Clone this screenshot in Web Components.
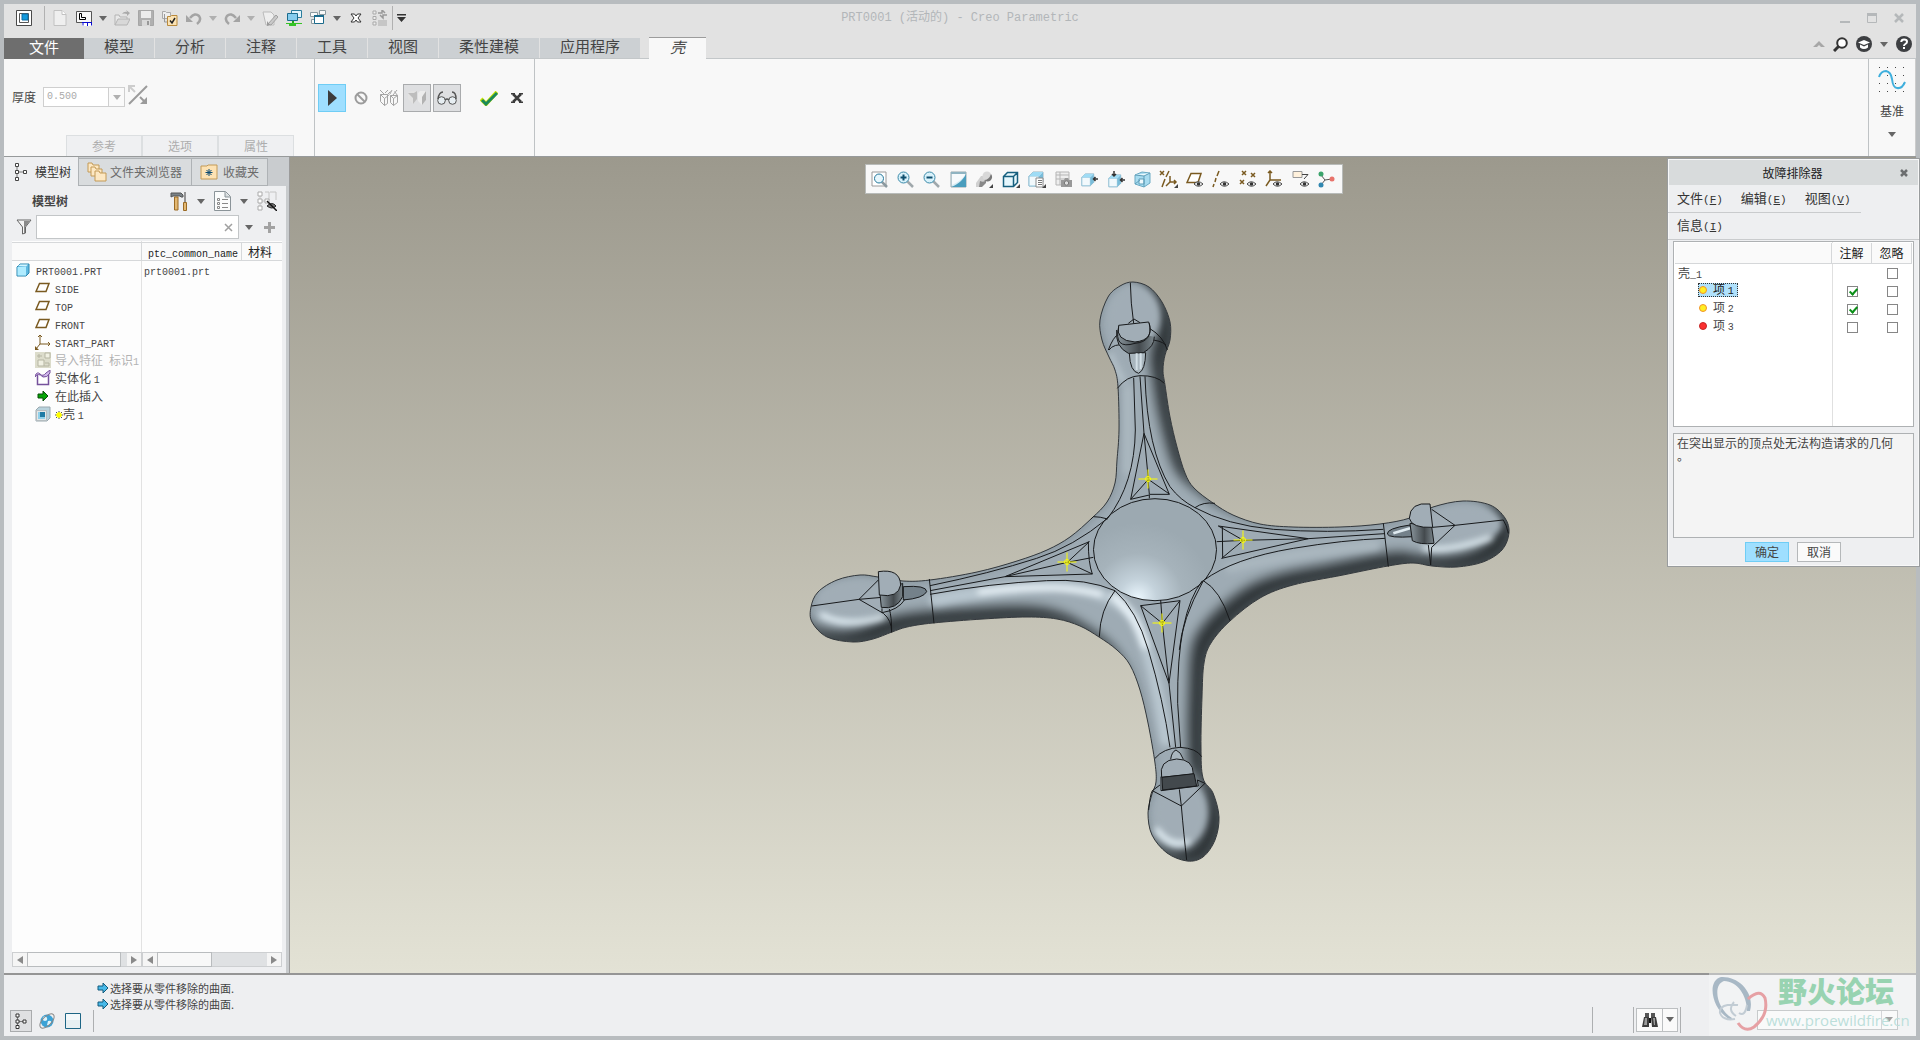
<!DOCTYPE html>
<html lang="zh-CN">
<head>
<meta charset="utf-8">
<title>PRT0001 (活动的) - Creo Parametric</title>
<style>
html,body{margin:0;height:100%}
body{font-family:"Noto Sans CJK SC","Liberation Sans",sans-serif;font-size:12px;line-height:18px;color:#454545;
--frame:#b8bcbf;--bar:#e2e2e2;--panel:#eeeff1;--sheet:#f8f8f8;--edge:#bfc3c5;--accent:#9fdfff;--accentEdge:#6fcdf5;--mono:"Liberation Mono",monospace}
</style>
</head>
<body>
<creo-app></creo-app>
<script>
const base=`*,:host{box-sizing:border-box}:host{display:block}:host([hidden]){display:none}
button,input,select,textarea{font:inherit;color:inherit;margin:0;padding:0;border:0;background:none;border-radius:0}
svg{display:block}.m{font-family:var(--mono);font-size:10px;line-height:10px}`;
function define(name,css,html){
  customElements.define(name,class extends HTMLElement{
    constructor(){super();this.attachShadow({mode:'open'});}
    connectedCallback(){
      if(this.ready)return;
      const t=document.createElement('template');
      t.innerHTML=`<style>${base}${css}</style>${typeof html==='function'?html(this):html}`;
      this.shadowRoot.append(t.content.cloneNode(true));this.ready=true;}
  });
}

/* icons: name -> [width, height, markup] */
const g='#b4b4b4', br='#7a5a20';
const cube=`<path d="M1 5l4-4h10v10l-4 4H1z" fill="#e2f3fb" stroke="#9db4bf"/><path d="M1 5h10v10H1z" fill="#f2f9fc" stroke="#8ec3da"/><path d="M11 5l4-4v10l-4 4z" fill="#79bcd9"/><path d="M1 5l4-4h10l-4 4z" fill="#9fdcf5"/>`;
const eye=`<path d="M8 14q4-4.500 9 0-4.500 4.500-9 0z" fill="#fff" stroke="#444"/><circle cx="12.500" cy="14" r="1.800" fill="#333"/>`;
const icons={
down:[8,5,`<path d="M0 0h8L4 5z" fill="#666"/>`],
downg:[8,5,`<path d="M0 0h8L4 5z" fill="#b0b0b0"/>`],
more:[9,8,`<path d="M0 0h9v1.500H0zM0 3h9L4.500 8z" fill="#333"/>`],
app:[16,16,`<path d="M.5.5h15v15H.5z" fill="#fff" stroke="#4a4a4a"/><path d="M3.500 3.500h9v9h-9z" fill="#fff" stroke="#555"/><path d="M6 4h6v6H6z" fill="#1299dc" stroke="#0b6aa2"/>`],
newf:[16,16,`<path d="M2 .5h8l4 4v11H2z" fill="#efefef" stroke="#c2c2c2"/><path d="M10 .5v4h4" fill="#fff" stroke="#c2c2c2"/>`],
win:[16,16,`<path d="M.5 1.500h15v11H.5z" fill="#f8f8f8" stroke="#555"/><path d="M3.500 3.500v6h6v-2h-4v-4z" fill="#fff" stroke="#000"/><path d="M6 12h10v4H6z" fill="#fff"/><path d="M7 15.500v-3h8.500v3M11.500 12v4M6 12.500h10" stroke="#0b0bd0" fill="none"/>`],
open:[16,16,`<path d="M1 15V5h4l1 2h7v2" fill="#e9e9e9" stroke="${g}"/><path d="M1 15l3-6h12l-3 6z" fill="#d8d8d8" stroke="${g}"/><path d="M8 4q2-3 5-2l-1-2 4 3-3 3v-2q-3-1-5 0z" fill="#aaa"/>`],
save:[16,16,`<path d="M.5.5h15v15H.5z" fill="#b0b0b0" stroke="#a6a6a6"/><path d="M3 1h10v7H3z" fill="#ececec"/><path d="M4 10h8v6H4z" fill="#d9d9d9"/><path d="M9 11h2v4H9z" fill="#999"/>`],
fold:[16,16,`<path d="M.5 1.500h3l1 1h4v6h-8z" fill="#eee" stroke="#aaa"/><path d="M2.500 4v8h3" stroke="#999" fill="none"/><path d="M5.500 6.500h3l1-1h5.500v10H5.500z" fill="#fbe3b4" stroke="#b98a3d"/><path d="M8 10.500l2 2.500 3-5" fill="none" stroke="#222" stroke-width="1.500"/>`],
undo:[16,16,`<path d="M4 8q5-6 9-2 3 4-2 8" fill="none" stroke="#a4a4a4" stroke-width="2.500"/><path d="M0 5v7h7z" fill="#a4a4a4"/>`],
redo:[16,16,`<path d="M12 8Q7 2 3 6q-3 4 2 8" fill="none" stroke="#a4a4a4" stroke-width="2.500"/><path d="M16 5v7H9z" fill="#a4a4a4"/>`],
regen:[16,16,`<path d="M1 2h8l3 3v10H4z" fill="#eee" stroke="#bbb"/><path d="M6 14l8-9 2 2-7 8z" fill="#c9c9c9" stroke="#a0a0a0"/><path d="M5 11l3 4-3 1z" fill="#999"/>`],
screens:[16,16,`<path d="M5.500.5h10v7h-10z" fill="#e4f5fc" stroke="#2a7d9d"/><path d="M1.500 3.500h10v7h-10z" fill="#86cdee" stroke="#1c6b8c"/><path d="M6 11h2v3H6z" fill="#27a51b"/><path d="M0 13h16v1H0zM3 14h7v2H3z" fill="#35c326"/>`],
windows:[16,16,`<path d="M.5 2.500h7v4h-7zM9.500.5h6v4h-6zM1.500 9.500h6v4h-6z" fill="#fafafa" stroke="#8c9a9f"/><path d="M4.500 5.500h9v8h-9z" fill="#fff" stroke="#1c6b8c"/><path d="M4 5h10v2H4z" fill="#1c6b8c"/>`],
closew:[16,16,`<path d="M3 4h3.500L8 6l1.500-2H13l-3 4 3 4H9.500L8 10l-1.500 2H3l3-4z" fill="#fff" stroke="#333"/>`],
list:[16,16,`<path d="M1 1h3v3H1zM1 6.500h3v3H1zM1 12h3v3H1z" fill="#eee" stroke="#a9a9a9"/><path d="M6 11h9M6 13h9M6 15h9" stroke="#aaa"/><path d="M6 3h4V0l3 3M15 5h-4v3L8 5" stroke="#999" fill="none" stroke-width="1.500"/>`],
min:[10,10,`<path d="M0 8h10v2H0z" fill="#b5b8ba"/>`],
max:[10,10,`<path d="M.5 1h9v8.500h-9z" fill="none" stroke="#b5b8ba"/><path d="M0 0h10v3H0z" fill="#b5b8ba"/>`],
cls:[10,10,`<path d="M1 1l8 8M9 1L1 9" stroke="#b5b8ba" stroke-width="2.500"/>`],
caret:[12,6,`<path d="M0 6l6-6 6 6H8L6 4 4 6z" fill="#a7a7a7"/>`],
find:[15,15,`<path d="M5.500 9.500L1 14" stroke="#333" stroke-width="3"/><circle cx="9" cy="6" r="4.800" fill="#fff" stroke="#333" stroke-width="2"/>`],
hat:[16,16,`<circle cx="8" cy="8" r="8" fill="#3d3f42"/><path d="M2 6.500L8 4l6 2.500L8 9z" fill="#fff"/><path d="M4 8.500v3q4 3 8 0v-3L8 10.500z" fill="#fff"/>`],
help:[16,16,`<circle cx="8" cy="8" r="8" fill="#3d3f42"/><path d="M5.200 6q.3-2.500 2.800-2.500 3 0 3 2.300 0 1.300-1.600 2.200Q8 8.800 8 10" fill="none" stroke="#fff" stroke-width="2"/><path d="M7 11h2v2H7z" fill="#fff"/>`],
flip:[20,20,`<path d="M1 19L19 1" stroke="#9b9b9b" stroke-width="2"/><path d="M1 7V1h6" fill="none" stroke="#cdcdcd" stroke-width="2"/><path d="M1 1l6 6" stroke="#cdcdcd" stroke-width="2"/><path d="M19 12v7h-7z" fill="#9b9b9b"/><path d="M12 12l6 6" stroke="#9b9b9b" stroke-width="2"/>`],
play:[9,16,`<path d="M0 0l9 8-9 8z" fill="#3c3c3c"/>`],
no:[14,14,`<circle cx="7" cy="7" r="5.500" fill="none" stroke="#9c9c9c" stroke-width="2"/><path d="M3 3l8 8" stroke="#9c9c9c" stroke-width="2"/>`],
wire:[20,18,`<path d="M1.500 5.500h7v9l-3 2-4-4zM8.500 5.500l3-3M11.500 6.500h7v7l-4 3-3-3zM18.500 6.500l-3-4M1.500 5.500l4 4v7M5.500 9.500l5-4M14.500 16.500v-7l4-3M11.500 6.500l3 3M1 1l4 4M9 1L6 4M13 1l-2 4M18 1l-4 5" fill="none" stroke="#a5a5a5"/>`],
solid:[20,18,`<path d="M1 4l3-2h6v8l-4 5-5-5z" fill="#e2e2e2"/><path d="M1 4h6l3-2v8l-4 5V9z" fill="#bdbdbd"/><path d="M11 4l2-2h6v9l-4 5-4-4z" fill="#ececec"/><path d="M15 8l4-6v9l-4 5z" fill="#b2b2b2"/>`],
glass:[20,16,`<circle cx="4.500" cy="10.500" r="3.800" fill="#e7eef2" stroke="#555"/><circle cx="15.500" cy="10.500" r="3.800" fill="#e7eef2" stroke="#555"/><path d="M8 10q2-2 4 0M1 9Q2 2 6 2M19 9q0-7-4-7" fill="none" stroke="#555" stroke-width="1.500"/>`],
check:[18,15,`<path d="M1 8l5 5L17 1" fill="none" stroke="#c6e300" stroke-width="4"/><path d="M2 9l4 4L17 2" fill="none" stroke="#1a8a5a" stroke-width="3"/>`],
xx:[12,12,`<path d="M2 2l8 8M10 2l-8 8" stroke="#3d3d3d" stroke-width="2.500"/><path d="M0 1h4v1.500H0zM8 1h4v1.500H8zM0 9.500h4V11H0zM8 9.500h4V11H8z" fill="#3d3d3d"/>`],
datum:[28,28,`<g fill="#444"><path d="M1 1h1v1H1zM9 1h1v1H9zM17 1h1v1h-1zM25 1h1v1h-1zM1 9h1v1H1zM9 9h1v1H9zM17 9h1v1h-1zM25 9h1v1h-1zM1 17h1v1H1zM9 17h1v1H9zM17 17h1v1h-1zM25 17h1v1h-1zM1 25h1v1H1zM9 25h1v1H9zM17 25h1v1h-1zM25 25h1v1h-1z"/></g><path d="M1 11q2-6 7-6 5 1 6 8 1 9 5 9 5 1 8-6" fill="none" stroke="#3fafdd" stroke-width="2"/>`],
tree:[14,20,`<path d="M3 5v10M5 10h5" stroke="#777"/><path d="M1.500 1.500h3v3h-3zM1.500 8.500h3v3h-3zM1.500 15.500h3v3h-3zM9.500 8.500h3v3h-3z" fill="#fff" stroke="#444"/>`],
treeb:[12,16,`<path d="M2.500 4v8M4 8.500h5" stroke="#777"/><path d="M1 1h3v3H1zM1 7h3v3H1zM1 12.500h3v3H1zM8 7h3v3H8z" fill="#fff" stroke="#333"/>`],
folders:[20,20,`<g fill="#fde8c3" stroke="#c39a57"><path d="M1 1h4l1 2h6v7H1z"/><path d="M4 5h4l1 2h6v7H4z"/><path d="M8 9h4l1 2h6v8H8z"/></g>`],
fav:[18,16,`<path d="M1 2h6l1-1h9v14H1z" fill="#fde2b3" stroke="#c39a57"/><path d="M9 5v7M5.500 8.500h7M6.500 6l5 5M11.500 6l-5 5" stroke="#0b4a73"/>`],
tools:[18,20,`<path d="M1 2h10l2 2v2h-2l-1-1H3L1 6z" fill="#7b8388" stroke="#555"/><path d="M4.500 6h3.500v13H4.500z" fill="#e3b873" stroke="#9a6a24"/><path d="M15 1v10" stroke="#777" stroke-width="1.500"/><path d="M13.500 11.500h3v8h-3z" fill="#e3b873" stroke="#9a6a24"/>`],
doc:[17,20,`<path d="M.5.5h11l5 5v14H.5z" fill="#fbfcfc" stroke="#8b9499"/><path d="M11 1v5h5" fill="#d7dcde" stroke="#8b9499"/><path d="M3.500 7.500h2v2h-2zM3.500 11.500h2v2H3.500zM3.500 15.500h2v2h-2z" fill="#fff" stroke="#888"/><path d="M8 8.500h6M8 12.500h6M8 16.500h6" stroke="#888"/>`],
treeeye:[20,20,`<path d="M3 5v10M5 10h5M8 1h4v8M13 1h6v8" stroke="#c4c4c4" fill="none"/><path d="M1 1h4v4H1zM1 8h4v4H1zM1 15h4v4H1zM8 8h4v4H8z" fill="#fff" stroke="#aaa"/><path d="M10 15q5-5 9 0-4 4-9 0z" fill="#777" stroke="#222"/><path d="M10 10l10 10" stroke="#111" stroke-width="1.500"/>`],
funnel:[16,16,`<path d="M1 1h14l-5.500 7v6l-3 1V8z" fill="#f4f4f4" stroke="#666"/><path d="M8 2h6L9 8v6H8z" fill="#8a8a8a"/>`],
tinyx:[9,9,`<path d="M1 1l7 7M8 1L1 8" stroke="#a0a0a0" stroke-width="1.500"/>`],
plus:[11,11,`<path d="M4 0h3v4h4v3H7v4H4V7H0V4h4z" fill="#a2a2a2"/>`],
part:[14,14,`<path d="M1 4l3-3h9v9l-3 3H1z" fill="#5db8e0" stroke="#2c86ae"/><path d="M1.500 4h8.500v8.500H1.500z" fill="#b0ecff"/><path d="M2 3l2-1.500h8L10 3.500z" fill="#d3f5ff"/>`],
plane:[16,12,`<path d="M4.500 1.500H14L11 9.500H1z" fill="#fff" stroke="${br}" stroke-width="1.500"/>`],
csys:[16,16,`<path d="M5 1v9l-4 5M5 10h10M3 3l2-2 2 2M13 8l2 2-2 2" fill="none" stroke="${br}"/><path d="M0 12v4h4z" fill="${br}"/>`],
imp:[16,16,`<path d="M0 0h16v16H0z" fill="#dcdccb"/><path d="M10 1h5v5h-5zM3 8h6v6H3z" fill="#f0f0e2" stroke="#b5b5a2"/><path d="M2 4h5M4 2v4M10 11h4v3H9" stroke="#b5b5a2" fill="none"/>`],
solidify:[16,16,`<path d="M2.500 5v9.500h11V4" fill="#fff" stroke="#76529c" stroke-width="1.500"/><path d="M0 6Q2 1 5 4q3 3 6-1l4-3v3q-3 5-7 4Q3 2 0 7z" fill="#d0b7ea" stroke="#76529c"/>`],
insert:[12,12,`<path d="M1 4h5V1l5 5-5 5V8H1z" fill="#05a405" stroke="#0a4d0a"/>`],
shell:[16,16,`<path d="M1 4l3-3h11v11l-3 3H1z" fill="#b9d3dd" stroke="#9aa9b0"/><path d="M1.500 4.500h10v10h-10z" fill="#e4e7e8" stroke="#b5bdc0"/><path d="M3 6h7v7H3z" fill="#8fd0ea"/><path d="M5 6h5v5H5z" fill="#1f7ba5"/>`],
star:[8,8,`<path d="M4 0v8M0 4h8M1 1l6 6M7 1L1 7" stroke="#555"/><path d="M4 1v6M1 4h6M2 2l4 4M6 2L2 6" stroke="#ff0" stroke-width="1.500"/>`],
la:[6,8,`<path d="M6 0v8L0 4z" fill="#8a8a8a"/>`],ra:[6,8,`<path d="M0 0v8l6-4z" fill="#8a8a8a"/>`],
zfit:[17,17,`<path d="M1 1h14v14H1z" fill="#fff" stroke="#9a9a9a"/><path d="M11 11l5 5" stroke="#8d9aa0" stroke-width="2.500"/><circle cx="8" cy="7.500" r="4.500" fill="#e6f6fc" stroke="#26789a"/>`],
zin:[17,17,`<path d="M10 10l6 6" stroke="#a0a8ac" stroke-width="2.500"/><circle cx="6.500" cy="6.500" r="5.500" fill="#d9f2fb" stroke="#3b8aa9"/><path d="M3.500 6.500h6M6.500 3.500v6" stroke="#0f4f6e" stroke-width="2"/>`],
zout:[17,17,`<path d="M10 10l6 6" stroke="#a0a8ac" stroke-width="2.500"/><circle cx="6.500" cy="6.500" r="5.500" fill="#d9f2fb" stroke="#3b8aa9"/><path d="M3.500 6.500h6" stroke="#0f4f6e" stroke-width="2"/>`],
repaint:[17,17,`<path d="M1 1h15v15H1z" fill="#d5ebf3" stroke="#98a8ae"/><path d="M1 16C5 15 13 10 16 3v13z" fill="#4a9dbd"/><path d="M2 3h13v1Q11 10 2 14z" fill="#f6fafc"/><path d="M1 1h15v2H1z" fill="#8fb4c2"/>`],
shade:[18,17,`<path d="M1 12l5-7h4v7l-4 4H1z" fill="#d0d0d0"/><circle cx="12" cy="5" r="4.500" fill="#d8d8d8"/><path d="M16 3a4.500 4.500 0 01-7 6q5 0 7-6z" fill="#777"/><path d="M5 10q4 2 6-1v3l-4 4H4z" fill="#888"/><path d="M18 13v4h-4z" fill="#444"/>`],
box:[18,17,`<path d="M1.500 5.500l4-4h10v10l-4 4h-10zM1.500 5.500h10v10M11.500 5.500l4-4" fill="#e6f7fd" stroke="#17607f" stroke-width="1.500"/><path d="M18 13v4h-4z" fill="#444"/>`],
boxl:[18,17,cube+`<path d="M8 7h7v9H8z" fill="#fff" stroke="#8a8a8a"/><path d="M10 9.500h4M10 11.500h4M10 13.500h4" stroke="#777"/><path d="M18 13v4h-4z" fill="#444"/>`],
cam:[17,17,`<path d="M1 1h13v13H1z" fill="#eee" stroke="#b5b5b5"/><path d="M1 4h13M1 8h13M5 1v13" stroke="#b5b5b5"/><path d="M6 9h3l1-2h3l1 2h3v7H6z" fill="#999"/><circle cx="11.500" cy="12" r="2.200" fill="#ddd" stroke="#777"/>`],
boxa:[17,17,`<g transform="translate(0 2) scale(.85)">${cube}</g><path d="M17 8h-4M14.500 6L12.500 8l2 2" fill="none" stroke="#333" stroke-width="1.500"/>`],
boxb:[17,17,`<g transform="translate(0 3) scale(.85)">${cube}</g><path d="M17 9h-4M14.500 7L12.500 9l2 2M6 0v5M4 3l2 2 2-2" fill="none" stroke="#333" stroke-width="1.500"/>`],
persp:[17,17,`<path d="M1 4l7-3 8 1v10l-6 4-9-3z" fill="#a8dcf0" stroke="#6aa9c3"/><path d="M1 4l9 1 6-3M10 5v11M5 8h5v5H5z" fill="#eef9fd" stroke="#5d9db8"/><path d="M1 13l5-4" stroke="#5d9db8"/>`],
datd:[19,18,`<path d="M1 1l4 4M5 1L1 5M10 1L7 7M6 9l-3 8" stroke="${br}" stroke-width="1.500"/><path d="M11 6v6l-4 4M11 12h6M15 10l2 2-2 2" fill="none" stroke="${br}" stroke-width="1.500"/><path d="M19 14v4h-4z" fill="#444"/>`],
pln:[18,18,`<path d="M5 3.500h10L12 12.500H1z" fill="#fff" stroke="${br}" stroke-width="1.500"/>${eye}`],
axi:[18,18,`<path d="M7 1L5 6M4 8l-1 4M2 14l-1 3" stroke="${br}" stroke-width="1.500"/>${eye}`],
pts:[18,18,`<path d="M3 1l4 4M7 1L3 5M12 3l4 4M16 3l-4 4M1 10l4 4M5 10l-4 4" stroke="${br}" stroke-width="1.500"/>${eye}`],
csy:[18,18,`<path d="M5 1v9l-4 6M5 10h11M3 3l2-2 2 2" fill="none" stroke="${br}" stroke-width="1.500"/>${eye}`],
ann:[18,18,`<path d="M1 1.500h9v6H1z" fill="#fff1dc" stroke="#999"/><path d="M10 4.500h6L12 9" fill="none" stroke="#444"/>${eye}`],
spin:[17,17,`<path d="M3 4l4 5 7-1M7 9l-4 5" stroke="#555" fill="none"/><circle cx="3" cy="3" r="2.500" fill="#3aa36b"/><circle cx="14" cy="8" r="2.500" fill="#e8736b"/><circle cx="3" cy="14" r="2.500" fill="#3187b0"/>`],
dx:[8,8,`<path d="M1 1l6 6M7 1L1 7" stroke="#6c6e70" stroke-width="2.500"/>`],
oy:[8,8,`<circle cx="4" cy="4" r="3.500" fill="#ffee22" stroke="#f0932a"/>`],
or:[8,8,`<circle cx="4" cy="4" r="3.500" fill="#fb3030" stroke="#c32626"/>`],
arrow:[12,12,`<path d="M1 4h5V1l5 5-5 5V8H1z" fill="#47b8e8" stroke="#125a7c"/>`],
globe:[16,16,`<circle cx="8" cy="8" r="6.500" fill="#3ba2d6"/><path d="M4 4q3-2 4 1t-2 3-2-4zM9 8q4-1 3 2t-4 2z" fill="#dff4fb"/><ellipse cx="8" cy="8" rx="9" ry="4.500" transform="rotate(-45 8 8)" fill="none" stroke="#888"/>`],
blank:[16,16,`<path d="M.5.5h15v15H.5z" fill="#e6eff2" stroke="#1d6585"/><path d="M1 1h14v6H1z" fill="#f3f8fa"/>`],
bino:[18,16,`<path d="M4 1h4v4H4zM10 1h4v4h-4z" fill="#555"/><path d="M3 5h5v10H1zM10 5h5l2 10h-6z" fill="#3d3d3d"/><path d="M8 6h2v5H8z" fill="#111"/><path d="M4 6h2v7H3zM12 6h2v7h-1z" fill="#9b9b9b"/>`]
};
define('creo-icon',':host{display:inline-block;flex:none;line-height:0}',el=>{const i=icons[el.getAttribute('name')];
  return `<svg width="${i[0]}" height="${i[1]}" viewBox="0 0 ${i[0]} ${i[1]}" aria-hidden="true">${i[2]}</svg>`;});
const ic=n=>`<creo-icon name="${n}"></creo-icon>`;
const btn=(n,l,c='')=>`<button type="button" class="${c}" aria-label="${l}">${ic(n)}</button>`;

define('creo-titlebar',`
:host{display:grid;grid-template-columns:1fr auto 1fr;height:34px;background:var(--bar)}
nav{display:flex;align-items:center;gap:8px;padding:0 0 6px 12px;height:34px}
button{width:16px;height:16px;display:flex;align-items:center;justify-content:center}
.a{width:8px;margin:0 -1px}
i{width:1px;height:24px;background:#b1b1b1}.f{margin:0 -1px 0 4px}.l{margin:0 -4px}.last{width:9px}
.t{font:12px/20px "Liberation Mono","Noto Sans CJK SC",monospace;color:#b2b6b9;padding-top:4px}
.w{display:flex;justify-content:flex-end;gap:11px;padding:6px 9px 0 0}`,
`<nav>${btn('app','窗口')}<i class="f"></i>${btn('newf','新建')}${btn('win','窗口')}${btn('down','更多','a')}${btn('open','打开')}${btn('save','保存')}${btn('fold','管理')}${btn('undo','撤消')}${btn('downg','更多','a')}${btn('redo','重做')}${btn('downg','更多','a')}${btn('regen','重新生成')}${btn('screens','刷新')}${btn('windows','切换窗口')}${btn('down','更多','a')}${btn('closew','关闭')}${btn('list','列表')}<i class="l"></i>${btn('more','自定义','last')}</nav>
<div class="t">PRT0001 (活动的) - Creo Parametric</div>
<div class="w">${btn('min','最小化')}${btn('max','最大化')}${btn('cls','关闭')}</div>`);

define('creo-tabs',`
:host{display:flex;justify-content:space-between;height:21px;background:var(--bar);border-bottom:1px solid #c3c7c9}
div{display:flex}.l{gap:1px}
.l button{height:20px;padding:0 20px 4px;background:#ccd0d3;font-size:15px;line-height:16px;color:#444}
.l .file{background:#6e6e6e;color:#fff;padding:0 25px 4px;height:21px;margin-right:-1px}
.l .on{background:var(--sheet);margin:-1px 0 -1px 8px;border-top:1px solid #9c9c9c;height:23px;font-style:italic;padding:0 21px 4px;position:relative}
.r{align-items:flex-start;padding-right:4px;gap:8px;margin-top:-2px}
.r button{height:16px;display:flex;align-items:center}`,
`<div class="l"><button class="file">文件</button><button>模型</button><button>分析</button><button>注释</button><button>工具</button><button>视图</button><button>柔性建模</button><button>应用程序</button><button class="on">壳</button></div>
<div class="r">${btn('caret','折叠')}${btn('find','搜索')}${btn('hat','学习')}${btn('down','更多')}${btn('help','帮助')}</div>`);

define('creo-ribbon',`
:host{display:flex;height:98px;background:var(--sheet);border-bottom:1px solid #979a9b}
.p{display:flex;flex-direction:column;justify-content:space-between;width:311px;border-right:1px solid var(--edge);padding-top:28px}
.row{display:flex;align-items:center;padding-left:8px;height:20px}
label{width:31px}
.in{display:flex;width:82px;height:20px;border:1px solid #cfcfcf;background:#fff;margin-right:3px}
input{width:64px;padding-left:3px;font-family:var(--mono);font-size:10px;color:#aaa}
.in button{flex:1;display:flex;align-items:center;justify-content:center;border-left:1px solid #cfcfcf;background:#fafafa}
.s{display:flex;padding-left:62px}
.s button{width:76px;height:21px;border:1px solid #dcdfe1;border-bottom:0;background:#eff0f2;color:#adadad}
.b{display:flex;align-items:flex-start;width:220px;border-right:1px solid var(--edge);padding:25px 0 0 3px}
.b button{width:28px;height:28px;display:flex;align-items:center;justify-content:center}
.b .go{background:var(--accent);border:1px solid var(--accentEdge);margin-right:1px}
.b .d{background:#dedfe1;border:1px solid #a9abad}
.b .d+.d{margin-left:2px}.b .ok{margin-left:14px}
.e{margin-left:auto;border-left:1px solid var(--edge);border-right:1px solid #ccc;width:48px;padding-top:7px;display:flex;flex-direction:column;align-items:center;gap:9px}
.e span{line-height:16px}.e button{display:flex;margin-top:4px}`,
`<section class="p"><div class="row"><label for="t">厚度</label><div class="in"><input id="t" value="0.500">${btn('downg','厚度列表')}</div>${btn('flip','反向')}</div>
<div class="s"><button>参考</button><button>选项</button><button>属性</button></div></section>
<section class="b">${btn('play','继续','go')}${btn('no','无预览')}${btn('wire','线框')}${btn('solid','着色','d')}${btn('glass','预览','d')}${btn('check','确定','ok')}${btn('xx','取消')}</section>
<section class="e">${ic('datum')}<span>基准</span>${btn('down','基准列表')}</section>`);

const row=(i,t,c2='',cls='')=>`<tr class="${cls}"><td><div class="n">${ic(i)}<span>${t}</span></div></td><td>${c2}</td><td></td></tr>`;
define('creo-tree',`
:host{display:flex;flex-direction:column;width:286px;background:var(--panel);border-right:1px solid #9b9b9b;flex:none}
.tabs{display:flex;background:#c9cccf;height:29px}
.tabs button{display:flex;align-items:center;gap:3px;background:#d9dcde;border:1px solid #aeb2b5;border-left:0;margin-top:1px;height:28px;color:#6b6b6b}
.tabs .on{background:var(--panel);border:0;margin:0;height:29px;width:75px;padding-left:10px;color:#333;gap:7px;border-right:1px solid #aeb2b5}
.tabs .t2{width:113px;padding-left:8px}.tabs .t3{width:76px;padding-left:8px;gap:5px}
.body{flex:1;display:flex;flex-direction:column;padding:3px 4px 6px 8px;border-right:3px solid #c8cbcd}
.h{display:flex;align-items:center;height:24px;padding:0 5px 0 20px;gap:9px}
.h b{flex:1}.h button{display:flex}
.s{display:flex;align-items:center;height:28px;padding:0 7px 0 4px;gap:4px}
.s .in{display:flex;align-items:center;width:203px;height:24px;background:#fff;border:1px solid #c3c6c8;padding-right:5px}
.s input{flex:1;min-width:0}.s .p{margin-left:auto}.s button{display:flex}.s .d{margin-left:2px}
.grid{flex:1;background:linear-gradient(90deg,transparent 129px,#e2e2e2 129px 130px,transparent 130px) #fdfdfd;padding-top:1px}
table{border-collapse:separate;border-spacing:0;table-layout:fixed;width:100%}
th{height:19px;padding:0 0 0 6px;text-align:left;font-weight:400;color:#222;background:#fafafa;border:1px solid #d6d8da;border-width:1px 1px 1px 0;line-height:17px;white-space:nowrap}
th:last-child{border-right:0}
td{padding:0 0 0 2px;height:18px;line-height:18px;white-space:nowrap;vertical-align:middle}
.n{display:flex;align-items:center;gap:4px;height:18px;padding-left:22px}
td:first-child{padding-left:1px}
.n creo-icon{width:16px}.n creo-icon[name=star]{width:8px}.n creo-icon[name=insert]{padding-left:2px}
.root .n{padding-left:3px;gap:4px}.dim{color:#b3b3b3}
.sb{display:flex;height:15px}
.bar{display:flex;height:15px;background:#dfe1e3;border:1px solid #cdcfd1}
.bar button{width:14px;display:flex;align-items:center;justify-content:center;background:#f5f5f5}
.bar i{background:#f8f8f8;border:1px solid #b9bcbe;margin:-1px 0}
.bar button:last-child{margin-left:auto}.b1{width:130px}.b1 i{width:94px}.b2{flex:1}.b2 i{width:55px}`,
`<div class="tabs"><button class="on">${ic('tree')}模型树</button><button class="t2">${ic('folders')}文件夹浏览器</button><button class="t3">${ic('fav')}收藏夹</button></div>
<div class="body"><div class="h"><b>模型树</b>${btn('tools','设置')}${btn('down','设置列表')}${btn('doc','显示')}${btn('down','显示列表')}${btn('treeeye','层')}</div>
<div class="s">${ic('funnel')}<div class="in"><input aria-label="搜索">${btn('tinyx','清除')}</div>${btn('down','搜索列表','d')}${btn('plus','添加','p')}</div>
<div class="grid"><table><colgroup><col style="width:130px"><col style="width:100px"><col></colgroup><thead><tr><th></th><th><span class="m">ptc_common_name</span></th><th>材料</th></tr></thead><tbody>
${row('part','<span class="m">PRT0001.PRT</span>','<span class="m">prt0001.prt</span>','root')}
${row('plane','<span class="m">SIDE</span>')}${row('plane','<span class="m">TOP</span>')}${row('plane','<span class="m">FRONT</span>')}${row('csys','<span class="m">START_PART</span>')}
${row('imp','导入特征<span class="m"> </span>标识<span class="m">1</span>','','dim')}${row('solidify','实体化 <span class="m">1</span>')}${row('insert','在此插入')}${row('shell',ic('star')+'壳 <span class="m">1</span>')}
</tbody></table></div>
<div class="sb"><div class="bar b1">${btn('la','左')}<i></i>${btn('ra','右')}</div><div class="bar b2">${btn('la','左')}<i></i>${btn('ra','右')}</div></div></div>`);

/* smooth closed curve through points (Catmull-Rom to Bezier) */
function smooth(p){const n=p.length;let d=`M${p[0]}`;for(let i=0;i<n;i++){const a=p[(i+n-1)%n],b=p[i],c=p[(i+1)%n],e=p[(i+2)%n];
 d+=`C${(b[0]+(c[0]-a[0])/6).toFixed(1)} ${(b[1]+(c[1]-a[1])/6).toFixed(1)} ${(c[0]-(e[0]-b[0])/6).toFixed(1)} ${(c[1]-(e[1]-b[1])/6).toFixed(1)} ${c[0]} ${c[1]}`;}return d+'Z';}
const body=smooth([[1133,282],[1149,287],[1162,302],[1170,322],[1170,340],[1165,355],[1163,370],[1165,385],[1170,417],[1177,447],[1185,473],[1194,488],[1213,503],[1233,515],[1260,524],[1293,527],[1340,527],[1380,524],[1410,518],[1433,507],[1463,501],[1490,505],[1505,518],[1509,533],[1502,550],[1483,562],[1457,567],[1432,566],[1413,563],[1388,566],[1343,575],[1293,585],[1260,598],[1230,621],[1211,643],[1204,663],[1202,697],[1201,747],[1203,778],[1213,793],[1219,817],[1215,840],[1203,857],[1187,861],[1167,853],[1152,835],[1148,813],[1152,794],[1156,782],[1155,763],[1148,723],[1140,690],[1130,665],[1117,650],[1099,637],[1080,626],[1057,619],[1027,617],[983,619],[933,623],[907,627],[892,632],[873,639],[853,642],[827,637],[812,622],[811,607],[818,592],[837,580],[860,575],[878,577],[903,581],[930,580],[977,572],[1017,561],[1047,550],[1070,537],[1092,518],[1107,502],[1115,483],[1117,460],[1119,430],[1118,387],[1115,370],[1109,357],[1102,340],[1100,320],[1108,297],[1120,286]]);
const mark=(x,y)=>`<g transform="translate(${x} ${y})"><path d="M-9.500 0h19M0-9.500v19" stroke="#ff0"/><circle r="2.500" fill="none" stroke="#ff0"/></g>`;
define('creo-model',':host{width:100%;height:100%}svg{width:100%;height:100%}',
`<svg viewBox="290 157 1626 816" preserveAspectRatio="xMidYMid meet" role="img" aria-label="模型">
<defs><clipPath id="c"><path d="${body}"/></clipPath>
<filter id="b6" x="-20%" y="-20%" width="140%" height="140%"><feGaussianBlur stdDeviation="6"/></filter>
<filter id="b3" x="-20%" y="-20%" width="140%" height="140%"><feGaussianBlur stdDeviation="3"/></filter>
<radialGradient id="disc" gradientUnits="userSpaceOnUse" cx="1138" cy="598" r="75"><stop offset="0" stop-color="#eaf6fd"/><stop offset=".25" stop-color="#c4d2db"/><stop offset=".6" stop-color="#a6b3bb"/><stop offset="1" stop-color="#9ca9b1"/></radialGradient>
<linearGradient id="cyl"><stop offset="0" stop-color="#8a969d"/><stop offset=".6" stop-color="#444a4e"/><stop offset="1" stop-color="#7b868c"/></linearGradient></defs>
<g clip-path="url(#c)"><path d="${body}" fill="#2f3538"/>
<path d="${body}" transform="translate(-13 -11)" fill="#9eabb4" filter="url(#b6)"/>
<path d="${body}" fill="none" stroke="#6d7980" stroke-width="4" opacity=".5" filter="url(#b3)"/>
<g fill="#a1adb6" filter="url(#b3)"><ellipse cx="1134" cy="316" rx="26" ry="30"/><ellipse cx="1463" cy="524" rx="39" ry="18"/><ellipse cx="1181" cy="813" rx="26" ry="33"/><ellipse cx="855" cy="598" rx="37" ry="17"/></g>
<g fill="none" stroke-linecap="round" filter="url(#b3)"><path d="M935 600Q1000 588 1055 586Q1115 590 1136 620Q1155 665 1166 740" stroke="#b8c6cf" stroke-width="12"/><path d="M980 592Q1050 583 1100 594" stroke="#edf6fb" stroke-width="5"/><path d="M1115 597Q1135 615 1145 645" stroke="#e8f2f8" stroke-width="8"/>
<path d="M1425 548Q1450 552 1490 538M822 615Q845 628 883 617M1157 830Q1170 848 1188 842" stroke="#eaf6fc" stroke-width="5"/><path d="M1128 390V470M1230 568Q1300 552 1375 545" stroke="#aab7bf" stroke-width="10"/><path d="M1110 355L1122 380" stroke="#b6c3cb" stroke-width="7"/></g></g>
<ellipse cx="1155" cy="549.700" rx="61.500" ry="51" fill="url(#disc)"/>
<path d="${body}" fill="none" stroke="#34393d"/>
<g fill="none" stroke="#17191b" stroke-width="3" stroke-linejoin="round">
<ellipse cx="1155" cy="549.700" rx="61.500" ry="51" stroke-width="1"/>
<g transform="translate(1060 270) scale(.33333)">
<path d="M211 38Q212 100 221 160M172 355Q200 318 240 317Q290 316 313 340M221 323L226 480Q224 640 143 745M240 319L252 490M255 319Q262 540 330 650Q360 690 405 713Q500 765 640 778Q800 790 970 778M252 490L212 688L268 675V685M252 490L328 673L268 673L264 628M252 490L265 628L212 688M265 628L328 672M143 747Q120 740 100 740L92 748M405 713Q430 695 465 700"/>
<path d="M475 768L745 806L485 865M487 770L488 862M475 768L550 811L485 865M550 811L745 806L973 791M470 815L550 811M430 932Q520 865 700 835Q850 810 975 805M970 760L985 890M430 932Q480 960 510 1052M430 932Q365 1050 358 1140"/>
<path d="M145 240Q160 200 176 192M270 176Q310 200 322 240M270 210Q300 210 318 225M147 240Q160 220 200 225M205 160L222 147L240 158"/>
<path d="M170 180Q165 230 205 250Q230 255 250 248Q283 230 283 200" fill="url(#cyl)"/><path d="M208 250Q210 305 236 310Q256 300 257 248z" fill="#a9b6be"/><path d="M230 250v50M242 250v48" stroke="#d3dfe6" stroke-width="6"/>
<path d="M176 166L266 156Q285 210 225 216Q165 212 176 166z" fill="#a1adb6"/><path d="M176 170Q160 240 225 220Q280 215 268 160"/>
<path d="M1050 765Q980 775 982 792Q985 805 1060 800z" fill="#74818a"/><path d="M1000 790L1050 775" stroke="#dfeaf0" stroke-width="8"/>
<path d="M1050 760L1057 812Q1080 825 1122 820L1115 770z" fill="url(#cyl)"/><path d="M1110 702Q1050 695 1048 745Q1055 775 1118 772z" fill="#a1adb6"/>
<path d="M1115 718L1185 766L1115 832L1112 885M1118 772L1185 766L1330 750M1105 825L1112 885M1330 750Q1340 765 1345 790"/></g>
<g transform="translate(790 470) scale(.33333)">
<path d="M898 215L645 320L907 312M895 215Q895 280 907 312M898 215L832 277L907 312M832 277L645 320L420 362M832 277L910 262M953 145Q850 230 740 265Q600 310 420 347M420 373Q600 340 770 332Q890 325 975 362Q1040 420 1075 540Q1120 690 1140 832M418 327L432 460M975 362Q930 420 928 500"/>
<path d="M1052 407L1170 392L1137 640L1052 407L1117 460L1170 392M1112 390L1117 460L1137 640L1157 832M1237 332Q1160 430 1163 700L1172 832M1095 865Q1120 835 1170 832Q1220 835 1235 860"/>
<path d="M65 408L207 388L300 380M265 330L207 388L280 430Q305 450 305 487M298 417Q305 440 305 487"/>
<path d="M340 350Q410 345 410 365Q400 385 340 390z" fill="#74818a"/><path d="M270 372L274 412Q320 420 338 380V340z" fill="url(#cyl)"/><path d="M265 305Q330 295 332 345Q325 385 268 375z" fill="#a1adb6"/><path d="M276 415V428Q325 420 345 388"/>
<path d="M1142 868Q1145 845 1158 840Q1172 845 1180 868" fill="#a9b6be"/><path d="M1115 922Q1105 870 1160 867Q1210 868 1210 912z" fill="#a1adb6"/><path d="M1116 922L1212 911L1220 948L1118 960z" fill="#43494d"/><path d="M1113 920V962L1225 948L1222 930L1245 940L1174 1008L1087 962L1110 945M1168 958L1174 1008Q1182 1100 1190 1170M1087 962Q1080 975 1076 1020"/></g></g>
${mark(1148,479)}${mark(1243,540)}${mark(1067,562)}${mark(1162,623)}
</svg>`);

define('creo-viewbar',`:host{display:flex;justify-content:space-between;align-items:center;width:478px;height:30px;background:#f8f8f8;border:1px solid #b8bbb9;padding:0 6px 0 4px}
button{display:flex;width:18px;justify-content:center}`,
['zfit','zin','zout','repaint','shade','box','boxl','cam','boxa','boxb','persp','datd','pln','axi','pts','csy','ann','spin'].map(n=>btn(n,n)).join(''));

const dr=(n,d,a,sel='')=>`<tr><td><span class="it ${sel}">${ic(d)}<span>项 <span class="m">${n}</span></span></span></td><td><input type="checkbox" aria-label="注解 ${n}" ${a}></td><td><input type="checkbox" aria-label="忽略 ${n}"></td></tr>`;
define('creo-dialog',`
:host{display:flex;flex-direction:column;width:253px;height:409px;background:var(--panel);border:1px solid #999c9e;box-shadow:inset 0 0 0 1px #f8f8f8}
header{display:flex;height:25px;background:#d8dbdc;align-items:center;margin:1px;color:#222}header span{flex:1;text-align:center;padding-left:16px}header button{width:18px;display:flex}
.mn{display:flex;flex-wrap:wrap;font-size:13px;color:#333}
.mn div{display:flex;gap:18px;padding:0 0 2px 9px;height:27px;width:193px;border-bottom:1px solid #c9cbcd}.mn div+div{width:100%}
.mn .m{font-size:11px}
.box{margin:1px 5px 0;height:186px;border:1px solid #aeb1b3;background:linear-gradient(90deg,transparent 158px,#e0e0e0 158px 159px,transparent 159px) #fff;padding:1px}
table{border-collapse:separate;border-spacing:0;width:100%;table-layout:fixed}
th{height:21px;background:#fafafa;font-weight:400;border:1px solid #d5d7d9;border-width:0 1px 1px 0;padding:0;line-height:18px;color:#222}
td{height:18px;padding:0 0 0 3px;line-height:18px;vertical-align:top}td+td{text-align:center;padding:4px 0 0 1px;line-height:0}
input{appearance:none;width:11px;height:11px;border:1px solid #868686;background:#fff;vertical-align:top;display:inline-block}
input:checked::after{content:"";display:block;width:3px;height:6px;border:solid #0b8f18;border-width:0 2px 2px 0;transform:rotate(42deg);margin:0 0 0 3px}
.it{display:inline-flex;align-items:center;gap:6px;height:14px;margin:1px 0 0 20px;padding:0 3px 0 0;line-height:12px;border:1px solid transparent;vertical-align:top}
.sel{background:#b0e1fb;border:1px dotted #333;color:#222}
textarea{display:block;margin:6px 5px 0;height:105px;border:1px solid #aeb1b3;background:#f4f4f4;resize:none;padding:2px 8px 2px 3px;line-height:13px;overflow:hidden}
footer{display:flex;justify-content:center;gap:8px;padding:4px 1px 0 0}footer button{width:44px;height:20px;border:1px solid #b5b8ba;background:#fafafa;line-height:16px}footer .ok{background:var(--accent);border-color:var(--accentEdge)}`,
`<header><span>故障排除器</span>${btn('dx','关闭')}</header>
<div class="mn"><div><button>文件<span class="m">(<u>F</u>)</span></button><button>编辑<span class="m">(<u>E</u>)</span></button><button>视图<span class="m">(<u>V</u>)</span></button></div><div><button>信息<span class="m">(<u>I</u>)</span></button></div></div>
<div class="box"><table><colgroup><col><col style="width:40px"><col style="width:40px"></colgroup><thead><tr><th></th><th>注解</th><th>忽略</th></tr></thead><tbody>
<tr><td>壳<span class="m">_1</span></td><td></td><td><input type="checkbox" aria-label="忽略 壳_1"></td></tr>
${dr(1,'oy','checked','sel')}${dr(2,'oy','checked')}${dr(3,'or','')}</tbody></table></div>
<textarea readonly aria-label="说明">在突出显示的顶点处无法构造请求的几何
。</textarea>
<footer><button class="ok">确定</button><button>取消</button></footer>`);

define('creo-watermark',`:host{display:flex;align-items:flex-start;width:207px;height:63px;background:rgba(248,250,250,.4);pointer-events:none}
svg{flex:none}.t{display:flex;flex-direction:column;margin-left:-3px}
b{font-size:29px;line-height:30px;color:#98d3b1;font-weight:900;margin:2px 0 0 12px;white-space:nowrap}
span{font:15px/20px "Open Sans",sans-serif;color:#bcdfdb;margin-top:5px;white-space:nowrap}`,
`<svg width="60" height="60" viewBox="0 0 60 60" fill="none"><path fill-rule="evenodd" d="M41 38C46 20 30 3 12 4-3 8 3 38 22 47L23 45C8 36 3 12 15 8 28 8 38 22 38 38z" fill="#a8b8c5"/><path d="M39 26Q51 15 56 25 60 42 45 54 36 60 29 50" stroke="#e6a0a4" stroke-width="3"/><path d="M29 32q-19-2-18 8 3 8 15 6M25 29q-7 8 2 14M30 40q6 4 8-8" stroke="#c2ccd4" stroke-width="2"/></svg>
<div class="t"><b>野火论坛</b><span>www.proewildfire.cn</span></div>`);

define('creo-status',`
:host{display:flex;position:relative;height:63px;background:var(--panel);border-top:2px solid #959595;align-items:flex-end}
.l{display:flex;align-items:center;gap:7px;padding:0 0 4px 6px;height:26px}
.l button{display:flex;align-items:center;justify-content:center}.l .on{width:22px;height:22px;border:1px solid #a9abad;background:#dfe0e2}
.l creo-icon[name=blank]{margin-left:3px}
i{width:1px;height:22px;background:#adafb1}.l i{margin-left:5px}
ul{list-style:none;margin:0;padding:5px 0 0 3px;align-self:flex-start;font-size:11px;line-height:16px;color:#444}li{display:flex;align-items:center;gap:1px}
.r{display:flex;align-items:center;margin-left:auto;padding:0 18px 3px 0;height:30px}
.r i{height:26px}.r .s1{margin-right:40px}
.fd{display:flex;margin:0 2px;width:42px;height:24px;border:1px solid #bcbfc1;background:#fafafa}.fd button{display:flex;align-items:center;justify-content:center;flex:1}.fd button+button{flex:none;width:15px;border-left:1px solid #bcbfc1}
.cb{position:relative;display:flex;align-items:center;margin-left:76px;width:141px;height:20px;border:1px solid #a9acae;background:#fafafa}
select{appearance:none;width:100%;height:100%;padding-right:15px}.cb creo-icon{position:absolute;right:4px}.cb::after{content:"";position:absolute;right:15px;height:18px;border-left:1px solid #bcbfc1}
creo-watermark{position:absolute;right:0;top:-2px}`,
`<div class="l">${btn('treeb','模型树','on')}${btn('globe','浏览器')}${btn('blank','全屏')}<i></i></div>
<ul><li>${ic('arrow')}选择要从零件移除的曲面.</li><li>${ic('arrow')}选择要从零件移除的曲面.</li></ul>
<div class="r"><i class="s1"></i><i></i><div class="fd">${btn('bino','查找')}${btn('down','查找列表')}</div><i></i><div class="cb"><select aria-label="过滤器"><option></option></select>${ic('down')}</div></div><creo-watermark></creo-watermark>`);

define('creo-app',`
:host{display:flex;flex-direction:column;height:100vh;border:4px solid var(--frame)}
main{flex:1;display:flex;position:relative;min-height:0}
.v{flex:1;min-width:0;position:relative;background:linear-gradient(#9c998d,#e3e2d5)}
creo-viewbar{position:absolute;top:7px;left:575px}creo-dialog{position:absolute;right:-4px;top:1px}`,
`<creo-titlebar></creo-titlebar><creo-tabs></creo-tabs><creo-ribbon></creo-ribbon>
<main><creo-tree></creo-tree><div class="v"><creo-model></creo-model><creo-viewbar></creo-viewbar></div><creo-dialog></creo-dialog></main>
<creo-status></creo-status>`);
</script>
</body>
</html>
